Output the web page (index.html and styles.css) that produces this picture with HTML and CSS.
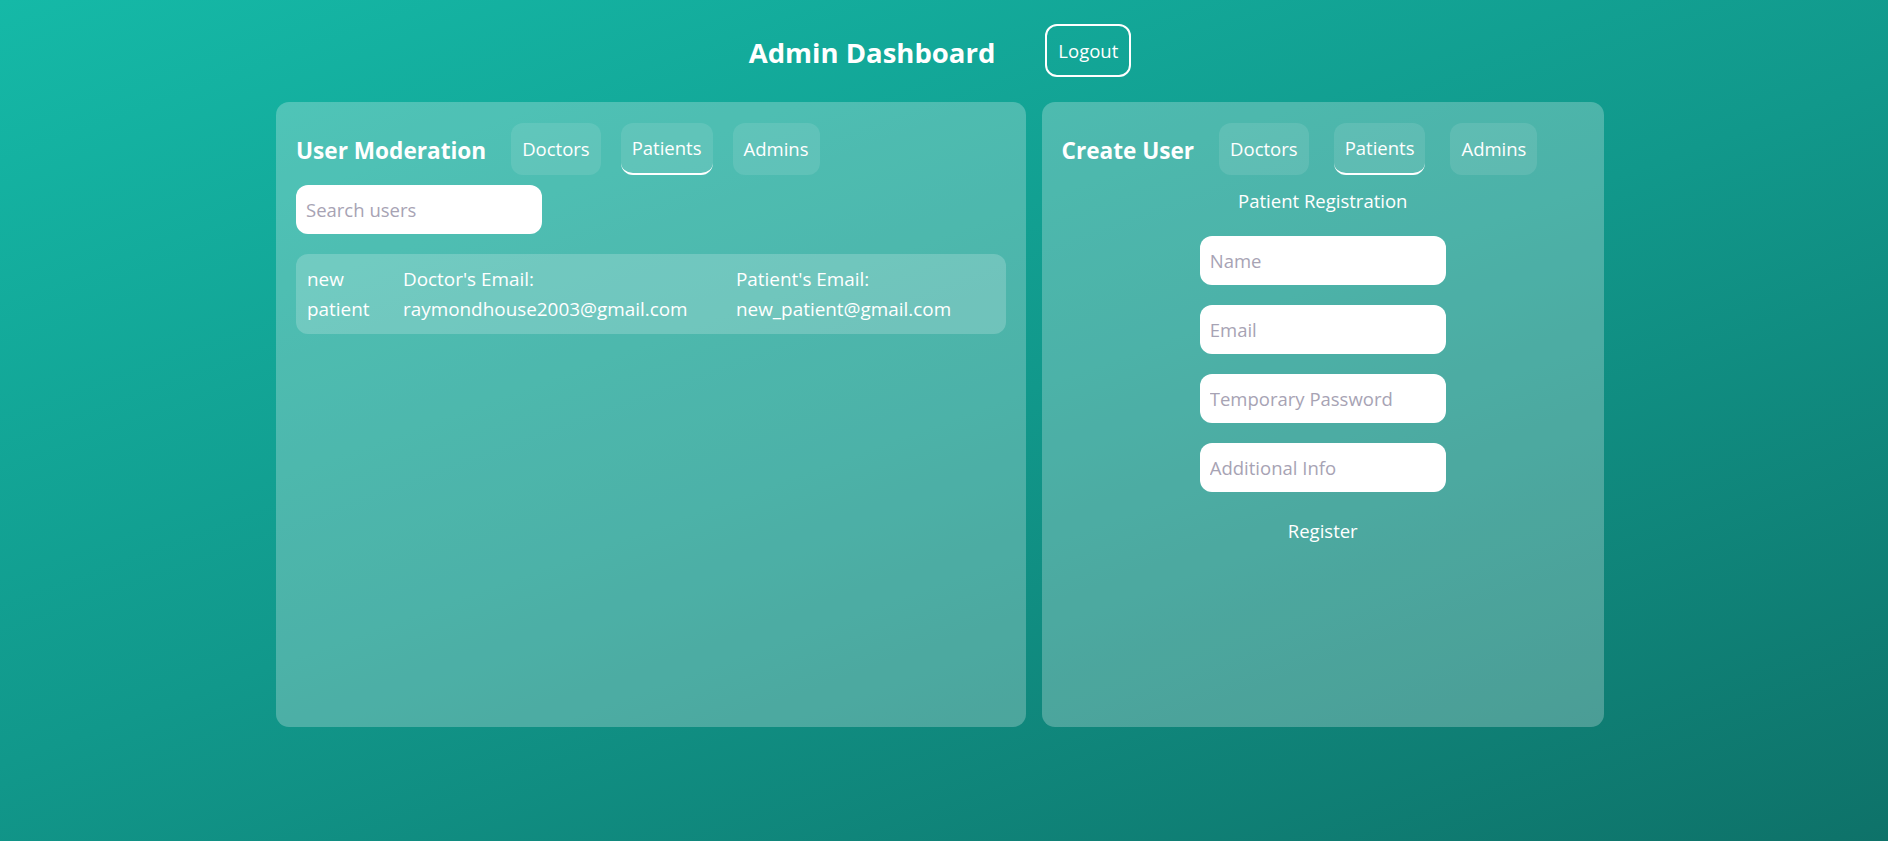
FILE: index.html
```html
<!DOCTYPE html>
<html lang="en">
<head>
<meta charset="utf-8">
<title>Admin Dashboard</title>
<link rel="stylesheet" href="styles.css">
</head>
<body>
<div class="page">
  <header class="topbar">
    <h1 class="title">Admin Dashboard</h1>
    <button class="logout" type="button">Logout</button>
  </header>
  <main class="panels">
    <section class="panel">
      <div class="panel-head">
        <h2 class="panel-title">User Moderation</h2>
        <div class="tabs">
          <button class="tab" type="button">Doctors</button>
          <button class="tab active" type="button">Patients</button>
          <button class="tab" type="button">Admins</button>
        </div>
      </div>
      <input class="field search" type="text" placeholder="Search users">
      <div class="user-list">
        <div class="user-row">
          <div class="user-name">new patient</div>
          <div class="user-col">Doctor's Email:<br>raymondhouse2003@gmail.com</div>
          <div class="user-col">Patient's Email:<br>new_patient@gmail.com</div>
        </div>
      </div>
    </section>
    <section class="panel">
      <div class="panel-head">
        <h2 class="panel-title">Create User</h2>
        <div class="tabs tabs-wide">
          <button class="tab" type="button">Doctors</button>
          <button class="tab active" type="button">Patients</button>
          <button class="tab" type="button">Admins</button>
        </div>
      </div>
      <form class="reg-form">
        <div class="form-title">Patient Registration</div>
        <input class="field" type="text" placeholder="Name">
        <input class="field" type="text" placeholder="Email">
        <input class="field" type="text" placeholder="Temporary Password">
        <input class="field" type="text" placeholder="Additional Info">
        <button class="register" type="button">Register</button>
      </form>
    </section>
  </main>
</div>
</body>
</html>
```
FILE: styles.css
```css
* { box-sizing: border-box; }

html, body { height: 100%; }

body {
  margin: 0;
  min-height: 841px;
  font-family: "Open Sans", "Noto Sans", sans-serif;
  font-size: 18.5px;
  line-height: 30px;
  color: #ffffff;
  background: linear-gradient(160deg, #15b9a7 0%, #11988b 50%, #0e7269 100%);
}

.page {
  padding: 24px 8px 0 0;
}

.topbar {
  display: flex;
  justify-content: center;
  align-items: center;
  gap: 50px;
  height: 53px;
}

.title {
  margin: 0;
  font-size: 27.5px;
  font-weight: 700;
  line-height: 1;
  padding-top: 4px;
}

.logout {
  font: inherit;
  color: #ffffff;
  background: transparent;
  border: 2px solid #ffffff;
  border-radius: 12px;
  padding: 9px 11px;
  line-height: 31px;
}

.panels {
  width: 1328px;
  margin: 25px auto 0;
  display: grid;
  grid-template-columns: 4fr 3fr;
  column-gap: 15.5px;
}

.panel {
  height: 625px;
  padding: 21px 20px 20px;
  border-radius: 13px;
  background: rgba(255, 255, 255, 0.25);
}

.panel-head {
  display: flex;
  align-items: center;
  gap: 25px;
}

.panel-title {
  margin: 0;
  font-size: 22.6px;
  font-weight: 700;
  line-height: 1;
  padding-top: 5px;
}

.tabs {
  display: flex;
  gap: 20px;
}

.tabs-wide {
  gap: 25px;
}

.tab {
  font: inherit;
  color: #ffffff;
  background: rgba(255, 255, 255, 0.1);
  border: none;
  border-radius: 12px;
  padding: 11px 11px;
  line-height: 30px;
}

.tab.active {
  padding: 10px 11px;
  border-bottom: 2px solid #ffffff;
}

.field {
  display: block;
  width: 246px;
  height: 49px;
  border: none;
  border-radius: 12px;
  padding: 0 10px;
  font: inherit;
  color: #333333;
  background: #ffffff;
  outline: none;
}

.field::placeholder {
  color: #a7a3b4;
}

.search {
  margin-top: 10px;
}

.user-list {
  margin-top: 20px;
}

.user-row {
  display: grid;
  grid-template-columns: 80px 317px 1fr;
  column-gap: 16px;
  padding: 10px 11px;
  border-radius: 12px;
  font-size: 18.9px;
  background: rgba(255, 255, 255, 0.2);
}

.reg-form {
  margin-top: 11px;
  display: flex;
  flex-direction: column;
  align-items: center;
  gap: 20px;
}

.form-title {
  line-height: 30px;
}

.register {
  font: inherit;
  color: #ffffff;
  background: transparent;
  border: none;
  padding: 4px 10px;
  line-height: 30px;
}
```
